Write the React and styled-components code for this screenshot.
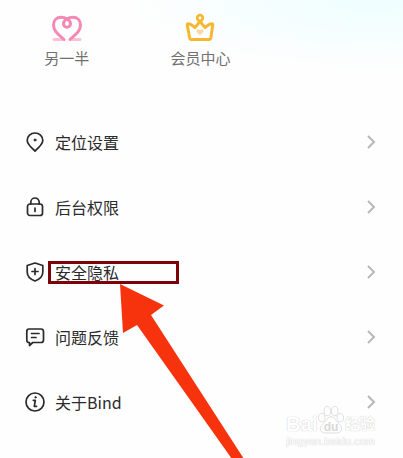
import React from 'react';
import styled, { createGlobalStyle } from 'styled-components';

const GlobalStyle = createGlobalStyle`
  * {
    box-sizing: border-box;
  }

  body {
    margin: 0;
    background: #fefefe;
    font-family: 'Noto Sans CJK SC', sans-serif;
  }
`;

const Page = styled.main`
  position: relative;
  min-height: 100vh;
  overflow: hidden;
  background:
    radial-gradient(ellipse 240px 70px at 92% 0, #effeff 0%, #f6feff 50%, transparent 100%),
    #fefefe;
`;

const Shortcuts = styled.nav`
  display: grid;
  grid-template-columns: repeat(3, 1fr);
  padding: 12px 2px 40px 0;
`;

const Shortcut = styled.a`
  display: flex;
  flex-direction: column;
  align-items: center;
  gap: 3px;
  color: #707070;
  font-size: 15px;
  line-height: 22px;
  text-decoration: none;

  svg {
    width: 32px;
    height: 32px;
  }
`;

const Menu = styled.ul`
  margin: 0;
  padding: 0;
  list-style: none;
`;

const MenuRow = styled.button`
  display: flex;
  align-items: center;
  width: 100%;
  height: 65px;
  padding: 0 26px 0 24px;
  border: 0;
  background: none;
  color: #2b2b2b;
  font-family: inherit;
  font-size: 16px;
  line-height: 24px;
  text-align: left;
  cursor: pointer;
`;

const RowIcon = styled.svg`
  flex: none;
  width: 22px;
  height: 22px;
  margin-right: 9px;
  fill: none;
  stroke: #2a2a2a;
  stroke-width: 1.7;
  stroke-linecap: round;
  stroke-linejoin: round;
`;

const Label = styled.span`
  position: relative;
  flex: 1;
`;

const Chevron = styled.svg`
  flex: none;
  width: 10px;
  height: 14px;
  fill: none;
  stroke: #b8b8b8;
  stroke-width: 2;
`;

const Highlight = styled.span`
  position: absolute;
  top: 1px;
  left: -7px;
  width: 131px;
  height: 23px;
  border: 3px solid #7c0309;
`;

const Arrow = styled.svg`
  position: absolute;
  z-index: 1;
  top: 24px;
  left: 65px;
  width: 124px;
  height: 175px;
  fill: #f7330e;
  pointer-events: none;
`;

const Watermark = styled.div`
  position: absolute;
  right: 28px;
  bottom: 10px;
  color: #fff;
  font-family: 'Liberation Sans', 'Noto Sans CJK SC', sans-serif;
  text-shadow: 0 0 1px #d0d0d0, 0 0 1px #d0d0d0;
  pointer-events: none;
`;

const Brand = styled.div`
  display: flex;
  align-items: flex-end;
  justify-content: space-between;
  font-weight: bold;
  line-height: 20px;
`;

const BrandName = styled.span`
  font-size: ${(props) => (props.$cjk ? '15px' : '20px')};
`;

const Paw = styled.svg`
  width: 26px;
  height: 29px;
  fill: #fefefe;
  stroke: #dcdcdc;
  stroke-width: 1;

  text {
    fill: #d8d8d8;
    stroke: none;
    font-size: 13px;
    font-weight: bold;
    text-shadow: none;
  }
`;

const Site = styled.div`
  font-size: 11px;
  line-height: 14px;
`;

const HeartIcon = () => (
  <svg viewBox="0 0 32 32" fill="none" stroke="#f589b5" strokeLinecap="round">
    <path d="M3 27.5h9M20 27.5h9" stroke="#fbc1d7" strokeWidth="3" />
    <path
      d="M13 27.5C8 23 2.5 19.500 2.500 13C2.500 8 6 5.300 10 5.300C14 5.300 19.500 7.500 19.500 11.800A3.500 3.500 0 0 1 12.500 11.800C12.500 7.500 18 5.300 22 5.300C26 5.300 29.500 8 29.500 13C29.500 19.500 24 23 19 27.500"
      strokeWidth="3"
    />
  </svg>
);

const CrownIcon = () => (
  <svg viewBox="0 0 32 32" fill="none" stroke="#f6b832" strokeLinejoin="round">
    <circle cx="16" cy="6" r="2.800" strokeWidth="2.800" />
    <path
      d="M16 9.500L11 15.500L7.300 12.800Q3 10.300 3.300 13.500L5.700 26Q6 27.500 7.500 27.500H25Q26.500 27.500 26.800 26L28.700 13.500Q29 10.300 24.700 12.800L21 15.500Z"
      strokeWidth="3"
    />
    <path
      d="M16 23.500L12.800 20C11.300 17.200 14.800 16 16 18.500C17.200 16 20.700 17.200 19.200 20Z"
      fill="#fbd9a0"
      stroke="none"
    />
  </svg>
);

const rows = [
  {
    label: '定位设置',
    icon: (
      <>
        <path d="M11 20C7 16.500 3.200 13 3.200 9.500A7.800 7.500 0 0 1 18.800 9.500C18.800 13 15 16.500 11 20Z" />
        <circle cx="11" cy="9" r="1" fill="#2a2a2a" strokeWidth="1" />
      </>
    ),
  },
  {
    label: '后台权限',
    icon: (
      <>
        <rect x="3.500" y="8" width="15" height="11.500" rx="2.500" />
        <path d="M6.800 8V6.200A4.200 4.200 0 0 1 15.200 6.200V8M11 12V15.500" />
      </>
    ),
  },
  {
    label: '安全隐私',
    marked: true,
    icon: (
      <>
        <path d="M11 2L18.800 4.500V11C18.800 15.500 15 18.500 11 20C7 18.500 3.200 15.500 3.200 11V4.500Z" />
        <path d="M11 7.500V13.500M8 10.500H14" />
      </>
    ),
  },
  {
    label: '问题反馈',
    icon: (
      <>
        <path d="M5 3H17Q19.500 3 19.500 5.500V14Q19.500 16.500 17 16.500H8.800L5.500 19.500V16.500H5Q2.800 16.500 2.800 14V5.500Q2.800 3 5 3Z" />
        <path d="M7.500 7.500H15M7.500 11.500H12" />
      </>
    ),
  },
  {
    label: '关于Bind',
    icon: (
      <>
        <circle cx="11" cy="11" r="9" />
        <path d="M9.300 9.300H11.300L10.300 15.300H12.500" />
        <circle cx="11.500" cy="6.300" r="0.700" fill="#2a2a2a" strokeWidth="1" />
      </>
    ),
  },
];

function App() {
  return (
    <Page>
      <GlobalStyle />
      <Shortcuts>
        <Shortcut href="#partner">
          <HeartIcon />
          另一半
        </Shortcut>
        <Shortcut href="#member">
          <CrownIcon />
          会员中心
        </Shortcut>
      </Shortcuts>
      <Menu>
        {rows.map((row) => (
          <li key={row.label}>
            <MenuRow type="button">
              <RowIcon viewBox="0 0 22 22">{row.icon}</RowIcon>
              <Label>
                {row.label}
                {row.marked && (
                  <>
                    <Highlight />
                    <Arrow viewBox="0 0 124 175">
                      <path d="M0 0L44 21.500L31 31L124 175H112L17 41L3 49Z" />
                    </Arrow>
                  </>
                )}
              </Label>
              <Chevron viewBox="0 0 10 14">
                <path d="M1 1L7 7L1 13" />
              </Chevron>
            </MenuRow>
          </li>
        ))}
      </Menu>
      <Watermark>
        <Brand>
          <BrandName>Bai</BrandName>
          <Paw viewBox="0 0 28 30">
            <ellipse cx="4" cy="13" rx="3.500" ry="4.500" />
            <ellipse cx="10" cy="6" rx="3.500" ry="5" />
            <ellipse cx="18" cy="6" rx="3.500" ry="5" />
            <ellipse cx="24" cy="13" rx="3.500" ry="4.500" />
            <path d="M14 12C18 12 19 17 23 20C28 25 25 29.500 20 29.500H8C3 29.500 0 25 5 20C9 17 10 12 14 12Z" />
            <text x="14" y="27" textAnchor="middle">du</text>
          </Paw>
          <BrandName $cjk>经验</BrandName>
        </Brand>
        <Site>jingyan.baidu.com</Site>
      </Watermark>
    </Page>
  );
}

export default App;
